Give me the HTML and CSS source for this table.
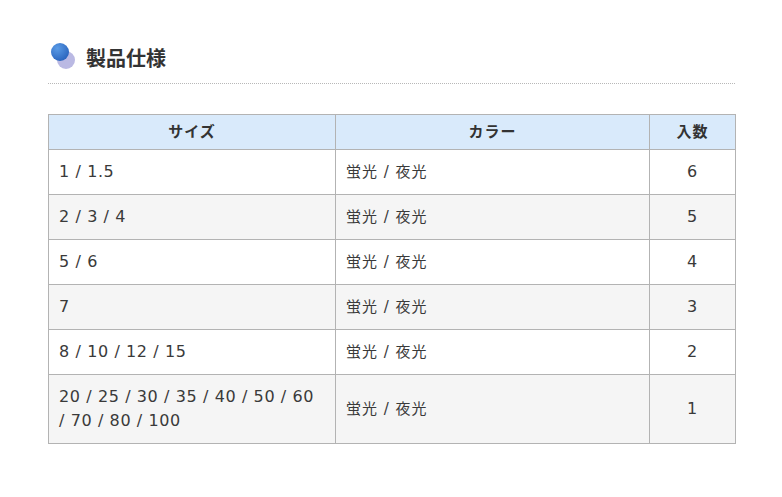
FILE: index.html
```html
<!DOCTYPE html>
<html lang="ja">
<head>
<meta charset="utf-8">
<link rel="stylesheet" href="styles.css">
</head>
<body>
<div class="wrap">
  <h2 class="ttl">
    <svg class="ttl-icon" width="26" height="28" viewBox="0 0 26 28">
      <defs>
        <radialGradient id="g1" cx="0.35" cy="0.3" r="0.75">
          <stop offset="0" stop-color="#5a9be6"/>
          <stop offset="1" stop-color="#2a64bd"/>
        </radialGradient>
      </defs>
      <circle cx="16" cy="19" r="9" fill="#a9a8dc" opacity="0.8"/>
      <circle cx="10" cy="11" r="9" fill="url(#g1)"/>
    </svg>
    <span>製品仕様</span>
  </h2>
  <table class="spec">
    <colgroup>
      <col class="c1"><col class="c2"><col class="c3">
    </colgroup>
    <thead>
      <tr><th>サイズ</th><th>カラー</th><th>入数</th></tr>
    </thead>
    <tbody>
      <tr><td>1 / 1.5</td><td class="clr">蛍光 / 夜光</td><td class="num">6</td></tr>
      <tr><td>2 / 3 / 4</td><td class="clr">蛍光 / 夜光</td><td class="num">5</td></tr>
      <tr><td>5 / 6</td><td class="clr">蛍光 / 夜光</td><td class="num">4</td></tr>
      <tr><td>7</td><td class="clr">蛍光 / 夜光</td><td class="num">3</td></tr>
      <tr><td>8 / 10 / 12 / 15</td><td class="clr">蛍光 / 夜光</td><td class="num">2</td></tr>
      <tr><td>20 / 25 / 30 / 35 / 40 / 50 / 60 / 70 / 80 / 100</td><td class="clr">蛍光 / 夜光</td><td class="num">1</td></tr>
    </tbody>
  </table>
</div>
</body>
</html>
```
FILE: styles.css
```css
html, body {
  margin: 0;
  padding: 0;
  background: #fff;
}
body {
  font-family: "DejaVu Sans", "Noto Sans CJK JP", sans-serif;
  color: #3a3a3a;
}
.wrap {
  width: 687px;
  margin-left: 48px;
  padding-top: 44px;
}
.ttl {
  display: flex;
  align-items: flex-start;
  margin: 0;
  padding: 0 0 9px 0;
  border-bottom: 1px dotted #b8b8b8;
  font-size: 20px;
  font-weight: bold;
  line-height: 30px;
  color: #333;
}
.ttl-icon {
  margin-left: 2px;
  margin-right: 10px;
  margin-top: -3px;
}
.spec {
  margin-top: 30px;
  width: 687px;
  border-collapse: collapse;
  table-layout: fixed;
  font-size: 16px;
  letter-spacing: 0.6px;
  line-height: 24px;
}
.c1 { width: 287px; }
.c2 { width: 314px; }
.c3 { width: 86px; }
.spec th, .spec td {
  border: 1px solid #b3b3b3;
  text-align: left;
  vertical-align: middle;
}
.spec th {
  background: #d9eafb;
  font-weight: bold;
  font-size: 15px;
  letter-spacing: 1px;
  color: #333;
  text-align: center;
  padding: 5px 10px;
}
.spec td {
  padding: 10px 10px;
}
.spec td.clr {
  font-size: 15px;
  letter-spacing: 1px;
}
.spec tbody tr:nth-child(even) td {
  background: #f5f5f5;
}
.spec td.num {
  text-align: center;
}
```
